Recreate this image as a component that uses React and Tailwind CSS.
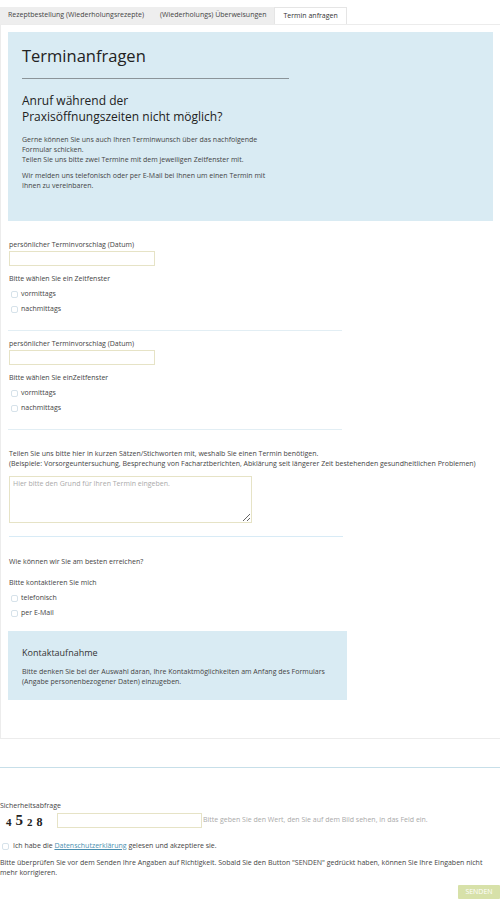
import { useState } from "react";

const font = { fontFamily: '"Open Sans", "Noto Sans", sans-serif' };

function Check({ label, className = "" }) {
  return (
    <label className={`flex items-center gap-[3px] h-[15px] ${className}`}>
      <span className="w-[7px] h-[7px] rounded-[2px] border border-[#d6e2ea] bg-white" />
      <span>{label}</span>
    </label>
  );
}

function DateBlock({ prompt }) {
  return (
    <div className="px-[8px]">
      <p className="leading-[10px]">persönlicher Terminvorschlag (Datum)</p>
      <div className="mt-[1px] w-[146px] h-[15px] border border-[#e6e3c6] bg-white" />
      <p className="mt-[8px] leading-[10px]">{prompt}</p>
      <div className="mt-[3px] pl-[2px]">
        <Check label="vormittags" />
        <Check label="nachmittags" />
      </div>
    </div>
  );
}

export default function App() {
  const [tab] = useState(2);
  const tabs = ["Rezeptbestellung (Wiederholungsrezepte)", "(Wiederholungs) Überweisungen", "Termin anfragen"];

  return (
    <div style={font} className="w-[500px] min-h-[905px] bg-white text-[#444] text-[7px]">
      <div className="pt-[7px] flex">
        {tabs.map((t, i) => (
          <div
            key={t}
            className={`h-[17px] px-[8px] flex items-center ${
              i === tab ? "bg-white border border-b-0 border-[#e5e5e5] relative -mb-px z-10 text-[#333]" : "bg-[#eeeeee]"
            }`}
          >
            {t}
          </div>
        ))}
      </div>

      <div className="border border-[#ececec] border-r-0 pt-[7px] pb-[38px]">
        <div className="mx-[7px] bg-[#d9ebf3] px-[14px] pt-[12px] pb-[30px]">
          <h1 className="text-[16.5px] leading-[24px] text-[#222]">Terminanfragen</h1>
          <div className="mt-[10px] w-[267px] border-t border-[#8b9499]" />
          <h2 className="mt-[14px] text-[12px] leading-[16px] text-[#222]">
            <span className="block">Anruf während der</span>
            <span className="block">Praxisöffnungszeiten nicht möglich?</span>
          </h2>
          <p className="mt-[10px] leading-[10px] w-[260px]">
            Gerne können Sie uns auch Ihren Terminwunsch über das nachfolgende Formular schicken.
            <br />
            Teilen Sie uns bitte zwei Termine mit dem jeweiligen Zeitfenster mit.
          </p>
          <p className="mt-[6px] leading-[10px] w-[260px]">
            Wir melden uns telefonisch oder per E-Mail bei Ihnen um einen Termin mit Ihnen zu vereinbaren.
          </p>
        </div>

        <div className="mt-[19px]">
          <DateBlock prompt="Bitte wählen Sie ein Zeitfenster" />
          <div className="mx-[7px] mt-[13px] mb-[8px] w-[334px] border-t border-[#e2eef4]" />
          <DateBlock prompt="Bitte wählen Sie einZeitfenster" />
          <div className="mx-[7px] mt-[13px] w-[334px] border-t border-[#e2eef4]" />
        </div>

        <div className="px-[8px] mt-[19px]">
          <p className="leading-[10px]">
            Teilen Sie uns bitte hier in kurzen Sätzen/Stichworten mit, weshalb Sie einen Termin benötigen.
            <br />
            (Beispiele: Vorsorgeuntersuchung, Besprechung von Facharztberichten, Abklärung seit längerer Zeit bestehenden gesundheitlichen Problemen)
          </p>
          <textarea
            placeholder="Hier bitte den Grund für Ihren Termin eingeben."
            className="mt-[7px] block w-[243px] h-[47px] border border-[#e6e3c6] px-[3px] py-[2px] text-[7px] placeholder:text-[#aaa] outline-none resize-y"
            style={font}
          />
          <div className="mt-[13px] w-[334px] border-t border-[#d8ebf6]" />
        </div>

        <div className="px-[8px] mt-[20px]">
          <p className="leading-[10px]">Wie können wir Sie am besten erreichen?</p>
          <p className="mt-[11px] leading-[10px]">Bitte kontaktieren Sie mich</p>
          <div className="mt-[3px] pl-[2px]">
            <Check label="telefonisch" />
            <Check label="per E-Mail" />
          </div>
        </div>

        <div className="mx-[7px] mt-[10px] w-[339px] bg-[#d9ebf3] px-[14px] pt-[15px] pb-[13px]">
          <h3 className="text-[9px] leading-[14px] text-[#333]">Kontaktaufnahme</h3>
          <p className="mt-[7px] leading-[10px]">
            Bitte denken Sie bei der Auswahl daran, Ihre Kontaktmöglichkeiten am Anfang des Formulars (Angabe personenbezogener Daten) einzugeben.
          </p>
        </div>
      </div>

      <div className="mt-[28px] border-t border-[#c7dfe9]" />

      <div className="mt-[33px]">
        <p className="leading-[10px]">Sicherheitsabfrage</p>
        <div className="flex items-center mt-[1px]">
          <div
            className="w-[57px] pl-[6px] flex items-end gap-[4px] font-bold text-[#222] h-[17px] pb-[1px]"
            style={{ fontFamily: '"Liberation Serif", "DejaVu Serif", serif' }}
          >
            <span className="text-[11px] leading-none">4</span>
            <span className="text-[15px] leading-none">5</span>
            <span className="text-[11px] leading-none">2</span>
            <span className="text-[12px] leading-none">8</span>
          </div>
          <div className="w-[145px] h-[15px] border border-[#e6e3c6] bg-white" />
          <span className="text-[#aaa] ml-[1px]">Bitte geben Sie den Wert, den Sie auf dem Bild sehen, in das Feld ein.</span>
        </div>

        <label className="flex items-center gap-[4px] mt-[12px] pl-[2px] h-[10px]">
          <span className="w-[7px] h-[7px] rounded-[2px] border border-[#d6e2ea] bg-white" />
          <span>
            Ich habe die <span className="text-[#4a8fb0] underline">Datenschutzerklärung</span> gelesen und akzeptiere sie.
          </span>
        </label>

        <p className="mt-[7px] leading-[10px]">
          Bitte überprüfen Sie vor dem Senden Ihre Angaben auf Richtigkeit. Sobald Sie den Button "SENDEN" gedrückt haben, können Sie Ihre Eingaben nicht mehr korrigieren.
        </p>

        <div className="flex justify-end mt-[7px]">
          <button className="w-[42px] h-[14px] bg-[#d7e1a9] text-white text-[7px] rounded-[1px]">SENDEN</button>
        </div>
      </div>
    </div>
  );
}
